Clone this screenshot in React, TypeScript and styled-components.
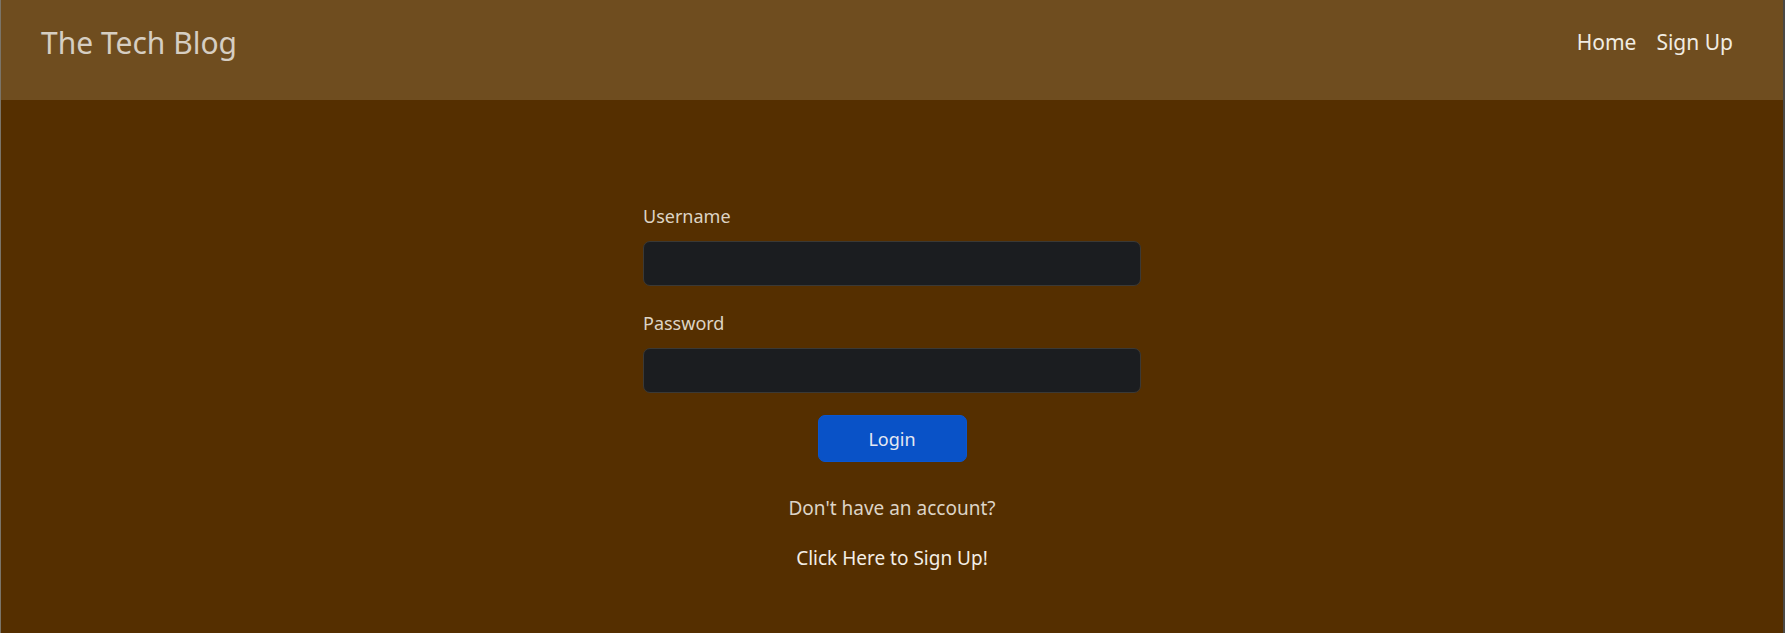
import React, { useState } from 'react';
import styled, { createGlobalStyle } from 'styled-components';

const GlobalStyle = createGlobalStyle`
  * {
    box-sizing: border-box;
  }

  html,
  body {
    margin: 0;
    padding: 0;
    background-color: #552f00;
  }

  body {
    font-family: 'Noto Sans', 'Open Sans', sans-serif;
  }
`;

const Page = styled.div`
  min-height: 633px;
  background-color: #552f00;
  border-left: 1px solid #7a7468;
  border-right: 2px solid #4a4845;
`;

const Header = styled.header`
  height: 100px;
  background-color: #6f4d1f;
  display: flex;
  align-items: center;
  justify-content: space-between;
  padding: 0 50px 16px 40px;
`;

const Brand = styled.a`
  font-size: 30px;
  color: #d6cec2;
  text-decoration: none;
`;

const Nav = styled.nav`
  display: flex;
  gap: 20px;
`;

const NavLink = styled.a`
  font-size: 21px;
  color: #f1ece2;
  text-decoration: none;
`;

const Main = styled.main`
  padding-top: 103px;
`;

const Form = styled.form`
  width: 498px;
  margin: 0 auto;
  display: flex;
  flex-direction: column;
`;

const Label = styled.label<{ $first?: boolean }>`
  font-size: 18px;
  line-height: 27px;
  color: #ddd4c5;
  margin-top: ${(p) => (p.$first ? '0' : '24px')};
  margin-bottom: 11px;
`;

const Input = styled.input`
  height: 45px;
  width: 100%;
  background-color: #1b1d20;
  border: 1px solid #3b3935;
  border-radius: 7px;
  color: #dee2e6;
  font-size: 18px;
  padding: 0 14px;
  outline: none;
`;

const Button = styled.button`
  align-self: center;
  width: 149px;
  height: 47px;
  margin-top: 22px;
  background-color: #0952c7;
  border: 1px solid #0a56cf;
  border-radius: 7px;
  color: #e4e9f2;
  font-family: inherit;
  font-size: 18px;
  cursor: pointer;
`;

const Note = styled.p<{ $bright?: boolean }>`
  margin: 0;
  text-align: center;
  font-size: 19px;
  line-height: 27px;
  color: ${(p) => (p.$bright ? '#f3eee6' : '#ddd4c6')};
`;

const Notes = styled.div`
  display: flex;
  flex-direction: column;
  gap: 23px;
  margin-top: 33px;
`;

const App = () => {
  const [username, setUsername] = useState('');
  const [password, setPassword] = useState('');

  return (
    <Page>
      <GlobalStyle />
      <Header>
        <Brand href='#'>The Tech Blog</Brand>
        <Nav>
          <NavLink href='#'>Home</NavLink>
          <NavLink href='#'>Sign Up</NavLink>
        </Nav>
      </Header>
      <Main>
        <Form onSubmit={(e) => e.preventDefault()}>
          <Label $first htmlFor='username'>
            Username
          </Label>
          <Input
            id='username'
            value={username}
            onChange={(e) => setUsername(e.target.value)}
          />
          <Label htmlFor='password'>Password</Label>
          <Input
            id='password'
            type='password'
            value={password}
            onChange={(e) => setPassword(e.target.value)}
          />
          <Button type='submit'>Login</Button>
        </Form>
        <Notes>
          <Note>Don't have an account?</Note>
          <Note $bright>Click Here to Sign Up!</Note>
        </Notes>
      </Main>
    </Page>
  );
};

export default App;
